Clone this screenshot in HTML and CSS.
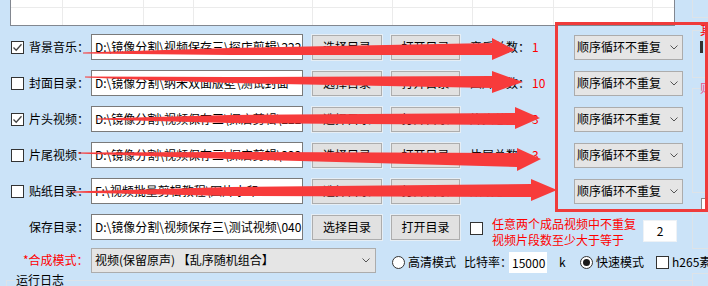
FILE: index.html
```html
<!DOCTYPE html>
<html lang="zh-CN">
<head>
<meta charset="utf-8">
<title>合成设置</title>
<link rel="stylesheet" href="styles.css">
</head>
<body>
<div class="page">
  <div class="main">
    <div class="grid">
      <span></span><span></span><span></span><span></span><span></span><span></span><span></span><span></span><span></span>
      <span></span><span></span><span></span><span></span><span></span><span></span><span></span><span></span><span></span>
    </div>

    <div class="rows">
      <div class="row">
        <div class="lab"><span class="cb"><svg viewBox="0 0 11 11" width="11" height="11"><polyline points="1.5,5.5 4.2,8.3 9.5,2.2" /></svg></span><span class="t">背景音乐：</span></div>
        <div class="field">D:\镜像分割\视频保存三\探店剪辑\222</div>
        <div class="btn">选择目录</div>
        <div class="btn b2">打开目录</div>
        <div class="count"><span class="k">音乐总数：</span><span class="v">1</span></div>
        <div class="combo"><span>顺序循环不重复</span><svg class="chev" viewBox="0 0 8 5" width="8" height="5"><polyline points="0.5,0.5 4,4 7.5,0.5"/></svg></div>
      </div>

      <div class="row">
        <div class="lab"><span class="cb"></span><span class="t">封面目录：</span></div>
        <div class="field">D:\镜像分割\纳米双面版壁\测试封面</div>
        <div class="btn">选择目录</div>
        <div class="btn b2">打开目录</div>
        <div class="count"><span class="k">图片总数：</span><span class="v">10</span></div>
        <div class="combo"><span>顺序循环不重复</span><svg class="chev" viewBox="0 0 8 5" width="8" height="5"><polyline points="0.5,0.5 4,4 7.5,0.5"/></svg></div>
      </div>

      <div class="row">
        <div class="lab"><span class="cb"><svg viewBox="0 0 11 11" width="11" height="11"><polyline points="1.5,5.5 4.2,8.3 9.5,2.2" /></svg></span><span class="t">片头视频：</span></div>
        <div class="field">D:\镜像分割\视频保存三\探店剪辑\222</div>
        <div class="btn">选择目录</div>
        <div class="btn b2">打开目录</div>
        <div class="count"><span class="k">片头总数：</span><span class="v">3</span></div>
        <div class="combo"><span>顺序循环不重复</span><svg class="chev" viewBox="0 0 8 5" width="8" height="5"><polyline points="0.5,0.5 4,4 7.5,0.5"/></svg></div>
      </div>

      <div class="row">
        <div class="lab"><span class="cb"></span><span class="t">片尾视频：</span></div>
        <div class="field">D:\镜像分割\视频保存三\探店剪辑\222</div>
        <div class="btn">选择目录</div>
        <div class="btn b2">打开目录</div>
        <div class="count"><span class="k">片尾总数：</span><span class="v">3</span></div>
        <div class="combo"><span>顺序循环不重复</span><svg class="chev" viewBox="0 0 8 5" width="8" height="5"><polyline points="0.5,0.5 4,4 7.5,0.5"/></svg></div>
      </div>

      <div class="row">
        <div class="lab"><span class="cb"></span><span class="t">贴纸目录：</span></div>
        <div class="field">F:\视频批量剪辑教程\图片水印</div>
        <div class="btn">选择目录</div>
        <div class="btn b2">打开目录</div>
        <div class="count"><span class="k">贴纸总数：</span><span class="v"></span></div>
        <div class="combo"><span>顺序循环不重复</span><svg class="chev" viewBox="0 0 8 5" width="8" height="5"><polyline points="0.5,0.5 4,4 7.5,0.5"/></svg></div>
      </div>

      <div class="row">
        <div class="lab plain"><span>保存目录：</span></div>
        <div class="field">D:\镜像分割\视频保存三\测试视频\040</div>
        <div class="btn">选择目录</div>
        <div class="btn b2">打开目录</div>
        <span class="cb cb-uniq"></span>
        <div class="warn">任意两个成品视频中不重复<br>视频片段数至少大于等于</div>
        <div class="numbox">2</div>
      </div>

      <div class="row last">
        <div class="lab plain"><span class="req">*合成模式：</span></div>
        <div class="combo wide"><span>视频(保留原声) 【乱序随机组合】</span><svg class="chev" viewBox="0 0 8 5" width="8" height="5"><polyline points="0.5,0.5 4,4 7.5,0.5"/></svg></div>
        <div class="opts">
          <span class="radio"></span><span class="ot">高清模式</span>
          <span class="rate">比特率：</span>
          <span class="ratebox">15000</span>
          <span class="unit">k</span>
          <span class="radio on"><i></i></span><span class="ot">快速模式</span>
          <span class="cb cb-h"></span><span class="ot">h265素材</span>
        </div>
      </div>
    </div>

    <div class="log"><span class="legend">运行日志</span></div>
  </div>

  <div class="side">
    <div class="g g1"></div>
    <div class="g g2"><span class="gt">其</span><span class="mark"></span></div>
    <div class="g g3"><span class="gt pink">则</span></div>
    <div class="wbox"></div>
    <div class="g g4"></div>
    <div class="g g5"></div>
  </div>

  <div class="redbox"></div>

  <svg class="arrows" viewBox="0 0 708 286" width="708" height="286">
    <polygon points="83,52.5 230,48 492,43 492,38 515,50 492,60 492,55 230,55 83,53.5"/>
    <polygon points="85,76.5 230,77 492,76 492,71 523,82 492,93 492,88 230,83 85,77.5"/>
    <polygon points="97,118.5 230,115 515,113 515,107 540,118 515,129 515,125 230,123 97,119.5"/>
    <polygon points="78,152.5 230,152 517,153 517,148 541,159 517,171 517,167 230,159 78,153.5"/>
    <polygon points="72,191.5 230,187 531,184 531,179 557,190 531,201 531,197 230,196 72,192.5"/>
  </svg>
</div>
</body>
</html>
```

FILE: styles.css
```css
* { box-sizing: border-box; }
html, body { margin: 0; padding: 0; }
body {
  width: 708px;
  height: 286px;
  overflow: hidden;
  background: #cbe3f8;
  font-family: "Noto Sans CJK SC", "Noto Sans", sans-serif;
  font-size: 12px;
  line-height: 16px;
  color: #000;
}
.page {
  position: relative;
  width: 708px;
  height: 286px;
  display: flex;
}
.main { width: 692px; flex: none; }

/* data grid */
.grid {
  margin-left: 10px;
  width: 665px;
  height: 26px;
  background: #fff;
  border: 1px solid #828790;
  border-top: none;
  display: grid;
  grid-template-columns: 52px 81px 50px 119px 80px 80px 81px 99px 1fr;
  grid-template-rows: 8px 17px;
}
.grid span { border-right: 1px solid #ebebeb; border-bottom: 1px solid #ebebeb; }
.grid span:nth-child(9n) { border-right: none; }
.grid span:nth-child(n+10) { border-bottom: none; }

/* form rows */
.rows { margin-top: 8px; display: flex; flex-direction: column; gap: 10px; }
.row { display: flex; align-items: center; height: 26px; white-space: nowrap; }
.row > * { flex: none; }
.row.last { margin-top: -3px; }

.lab { width: 84px; display: flex; align-items: center; white-space: nowrap; overflow: visible; }
.lab > span { flex: none; }
.lab .t { margin-left: 5px; }
.lab.plain { padding-left: 29px; }
.req { color: #f00; margin-left: -6px; }

.cb {
  width: 13px; height: 13px;
  border: 1px solid #333;
  background: #fff;
  margin-left: 11px;
  flex: none;
  display: flex; align-items: center; justify-content: center;
}
.cb svg polyline { fill: none; stroke: #444; stroke-width: 1.3; }

.field {
  margin-left: 7px;
  width: 212px; height: 26px;
  border: 1px solid #7a7a7a;
  background: #fff;
  padding-left: 3px;
  white-space: nowrap;
  overflow: hidden;
  line-height: 24px;
}
.btn {
  margin-left: 9px;
  width: 70px; height: 25px;
  background: #e1e1e1;
  border: 1px solid #adadad;
  box-shadow: 0 0 0 1px #e6eef5;
  display: flex; align-items: center; justify-content: center;
}
.btn.b2 { width: 69px; }

.count { margin-left: 10px; width: 104px; display: flex; }
.count .k { width: 62px; white-space: nowrap; }
.count .v { color: #f00; }

.combo {
  width: 109px; height: 25px;
  background: #e5e5e5;
  border: 1px solid #acacac;
  display: flex; align-items: center; justify-content: space-between;
  padding-left: 2px; padding-right: 4px;
  white-space: nowrap;
}
.combo.wide { margin-left: 7px; width: 285px; padding-left: 3px; padding-right: 5px; }
.chev polyline { fill: none; stroke: #555; stroke-width: 1; }

/* row 6 extras */
.cb-uniq { margin-left: 10px; margin-top: 3px; }
.warn { margin-left: 9px; width: 146px; color: #f00; line-height: 16px; margin-top: 10px; white-space: nowrap; }
.numbox {
  margin-left: 5px; margin-top: 8px;
  width: 34px; height: 22px;
  background: #fff;
  border: 1px solid #eef2f6;
  text-align: center; line-height: 20px;
}

/* row 7 options */
.opts { display: flex; align-items: center; margin-top: 4px; white-space: nowrap; }
.opts > * { flex: none; }
.radio {
  width: 13px; height: 13px;
  border: 1px solid #333;
  border-radius: 50%;
  background: #fff;
  margin-left: 16px;
  display: flex; align-items: center; justify-content: center;
}
.radio.on { margin-left: 15px; }
.radio i { width: 7px; height: 7px; border-radius: 50%; background: #1a1a1a; }
.ot { margin-left: 3px; }
.rate { margin-left: 8px; }
.ratebox { margin-left: -3px; width: 38px; height: 21px; background: #fff; padding-left: 3px; line-height: 21px; }
.unit { margin-left: 12px; width: 6px; }
.cb-h { margin-left: 12px; }

/* log group */
.log {
  margin-left: 6px;
  margin-top: 7px;
  height: 20px;
  border-top: 1px solid #dde3e8;
  border-left: 1px solid #dde3e8;
}
.legend {
  display: inline-block;
  margin-top: -8px;
  margin-left: 8px;
  padding: 0 1px;
  line-height: 14px;
  background: #cbe3f8;
  vertical-align: top;
}

/* right side partial groups */
.side { flex: 1; display: flex; flex-direction: column; }
.g { border: 1px solid #dde3e8; border-right: none; flex: none; }
.g1 { height: 18px; border-top: none; }
.g2 { margin-top: 12px; height: 48px; }
.g3 { margin-top: 10px; height: 105px; }
.g4 { margin-top: 1px; height: 36px; }
.g5 { margin-top: 24px; height: 20px; border-bottom: none; }
.gt {
  display: block;
  width: 13px;
  margin-top: -8px;
  margin-left: 7px;
  color: #f00;
  line-height: 14px;
  background: #cbe3f8;
  white-space: nowrap;
}
.gt.pink { color: #f0508a; }
.mark { display: block; margin-left: 7px; margin-top: 4px; width: 3px; height: 12px; background: #333; }
.wbox { flex: none; margin-top: 5px; margin-left: 9px; height: 14px; background: #fff; border: 1px solid #8a8a8a; border-right: none; }

/* annotations overlay */
.redbox {
  position: absolute;
  left: 555px; top: 22px;
  width: 153px; height: 190px;
  border: 3px solid #ef3b3b;
}
.arrows {
  position: absolute;
  left: 0; top: 0;
  pointer-events: none;
}
.arrows polygon { fill: #f73b3b; }
```
